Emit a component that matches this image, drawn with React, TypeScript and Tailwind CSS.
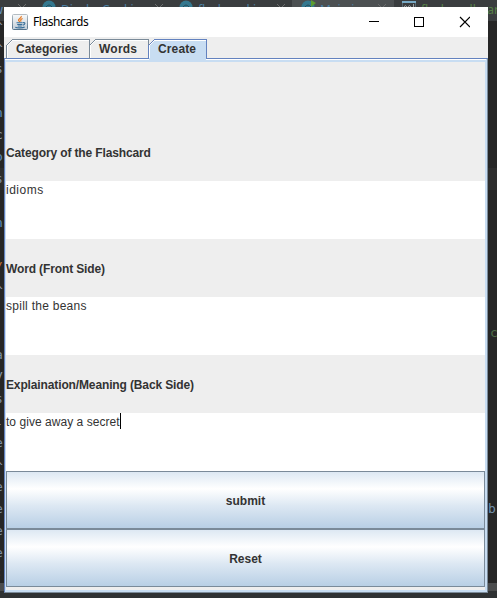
import React from "react";

const sans = "font-['Liberation_Sans',Arial,sans-serif]";

const gutter = [
  { y: 0, t: "w", c: "text-[#5f8fbd]" },
  { y: 17, t: "^", c: "text-[#8a9aab]" },
  { y: 39, t: "^", c: "text-[#8a9aab]" },
  { y: 59, t: "s", c: "text-[#7d8fa3]" },
  { y: 103, t: "n", c: "text-[#5f8fbd]" },
  { y: 125, t: "c", c: "text-[#8a9aab]" },
  { y: 147, t: "o", c: "text-[#5f8fbd]" },
  { y: 169, t: "s", c: "text-[#7d8fa3]" },
  { y: 213, t: "n", c: "text-[#5f8fbd]" },
  { y: 257, t: "/", c: "text-[#cc7832]" },
  { y: 281, t: "^", c: "text-[#8a9aab]" },
  { y: 345, t: "a", c: "text-[#7d8fa3]" },
  { y: 365, t: "y", c: "text-[#8a9aab]" },
  { y: 389, t: "s", c: "text-[#7d8fa3]" },
  { y: 414, t: "-", c: "text-[#8a9aab]" },
  { y: 433, t: "e", c: "text-[#7d8fa3]" },
  { y: 457, t: "^", c: "text-[#8a9aab]" },
  { y: 477, t: "e", c: "text-[#7d8fa3]" },
  { y: 499, t: "e", c: "text-[#7d8fa3]" },
  { y: 521, t: "e", c: "text-[#7d8fa3]" },
  { y: 543, t: "e", c: "text-[#7d8fa3]" },
  { y: 562, t: ":", c: "text-[#8a9aab]" },
];

function EditorBehind() {
  return (
    <div className="absolute inset-0 overflow-hidden bg-[#262626] font-['Noto_Sans',sans-serif] text-[12px]">
      <div className="absolute inset-x-0 top-0 h-[21px] bg-[#3a3d3f]" />
      <div className="absolute left-[292px] top-0 h-[7px] w-[102px] bg-[#4c5052]" />
      <div className="absolute left-0 top-[168px] h-[22px] w-full bg-[#2d2d2d]" />
      <div className="absolute bottom-0 left-0 h-[15px] w-full bg-[#4b4c4d]" />
      <div className="absolute bottom-0 left-0 h-[7px] w-full bg-[#2f3233]" />
      <span className="absolute left-[61px] top-0 whitespace-nowrap leading-[19px] text-[#4a7fa3]">DisplayCooking</span>
      <span className="absolute left-[198px] top-0 whitespace-nowrap leading-[19px] text-[#4a7fa3]">flashcard.java</span>
      <span className="absolute left-[320px] top-0 whitespace-nowrap leading-[19px] text-[#4a7fa3]">Main.java</span>
      <span className="absolute left-[421px] top-0 whitespace-nowrap leading-[19px] text-[#568047]">flashcardboard</span>
      <svg className="absolute left-0 top-0" width="497" height="8" fill="none">
        <circle cx="49" cy="7" r="6.5" fill="#34788f" />
        <circle cx="186" cy="7" r="6.5" fill="#34788f" />
        <circle cx="308" cy="7" r="6.5" fill="#34788f" />
        <path d="M46 7q3-4 6 0M183 7q3-4 6 0M305 7q3-4 6 0" stroke="#254b59" />
        <path d="M311 0l5 3-5 4z" fill="#5b9c30" />
        <path d="M402.500 1v6M415.500 1v6" stroke="#596a74" />
        <path d="M402 2h14" stroke="#77a9c5" strokeWidth="2" />
        <path d="M404 7q1-3 3 0M408 7q1-3 3 0M413.500 4v3" stroke="#9aa0a3" />
        <path d="M18 4l8 8M26 4l-8 8M155 4l8 8M163 4l-8 8M277 4l8 8M285 4l-8 8M378 4l8 8M386 4l-8 8" stroke="#6b6d6e" />
      </svg>
      {gutter.map((g) => (
        <span key={g.y} className={`absolute -left-[5px] font-['DejaVu_Sans_Mono',monospace] text-[13px] leading-5 ${g.c}`} style={{ top: g.y }}>
          {g.t}
        </span>
      ))}
      <span className="absolute left-[490px] top-[323px] font-['DejaVu_Sans_Mono',monospace] text-[13px] leading-5 text-[#4e6d46]">c</span>
      <span className="absolute left-[488px] top-[499px] font-['DejaVu_Sans_Mono',monospace] text-[13px] leading-5 text-[#7190ac]">b</span>
    </div>
  );
}

function JavaIcon() {
  return (
    <svg width="16" height="16" viewBox="0 0 16 16" fill="none">
      <defs>
        <linearGradient id="cupBg" x1="0" y1="0" x2="0" y2="1">
          <stop stopColor="#f8fafb" />
          <stop offset="1" stopColor="#c3ced7" />
        </linearGradient>
        <linearGradient id="cupEdge" x1="0" y1="0" x2="0" y2="1">
          <stop stopColor="#b4bcc2" />
          <stop offset="1" stopColor="#55748c" />
        </linearGradient>
      </defs>
      <rect x=".5" y=".5" width="15" height="15" rx="1" fill="url(#cupBg)" stroke="url(#cupEdge)" />
      <path d="M9.300 2C9.800 4.200 6 4.600 6.600 6.400L7.800 8M10.600 4.500C8.400 5.200 8.500 6.200 9 7.600" stroke="#e8761c" strokeWidth="1.200" />
      <path d="M4.500 8.800h6.200M5.200 10.500h5M5.800 12h4M11 8.800c2.800-.8 2.300 2-.3 2.300M3.300 13.200c2 1 7.400.9 9.400-.2" stroke="#386f99" strokeWidth="1.100" />
    </svg>
  );
}

function TitleBar() {
  return (
    <header className="flex h-[30px] shrink-0 items-center bg-white pl-2 pr-[18px] font-['Noto_Sans',sans-serif]">
      <JavaIcon />
      <span className="ml-[5px] text-[12px] tracking-[-0.42px] text-black">Flashcards</span>
      <svg className="ml-auto" width="103" height="12" viewBox="0 0 103 12" fill="none" stroke="#000">
        <path d="M2 5.500h10M47.500 1.500h9v9h-9z" shapeRendering="crispEdges" />
        <path d="M93 1l10 10M103 1l-10 10" strokeWidth="1.200" />
      </svg>
    </header>
  );
}

function Tab({ label, width, textWidth, active }: { label: string; width: number; textWidth: number; active?: boolean }) {
  return (
    <div className="relative h-[19px]" style={{ width }}>
      <svg className="absolute left-0 top-0" width={width + 1} height="21" shapeRendering="crispEdges">
        {active && <path d={`M1 21V6L6 1H${width}V21z`} fill="#c8ddf2" />}
        <path d={`M1.500 19V6.500L6.500 1.500H${width}`} fill="none" stroke="#ffffff" />
        <path d={`M.5 19.500V6.500L6.500 .5H${width + 0.5}V19.500`} fill="none" stroke={active ? "#6382bf" : "#7a8a99"} />
      </svg>
      <svg className="relative block" width={width} height="19">
        <text x="10" y="14" textLength={textWidth} fill="#333333" className="font-['Liberation_Sans',Arial,sans-serif] text-[12px] font-bold">
          {label}
        </text>
      </svg>
    </div>
  );
}

type FieldProps = { label: string; value: string; height?: string; tracking: string; caret?: boolean };

function Field({ label, value, height = "h-[58px]", tracking, caret }: FieldProps) {
  return (
    <>
      <div className={`flex shrink-0 items-end bg-[#eeeeee] pb-[21px] ${height}`}>
        <span className="text-[12px] font-bold leading-[14px] tracking-[-0.13px]">{label}</span>
      </div>
      <div className="flex h-[58px] shrink-0 items-start bg-white">
        <span className={`pt-[2px] text-[12px] leading-[15px] ${tracking}`}>{value}</span>
        {caret && <span className="h-4 w-px bg-black" />}
      </div>
    </>
  );
}

function SwingButton({ label }: { label: string }) {
  return (
    <button className="block h-[58px] w-full shrink-0 border border-[#7a8a99] bg-[linear-gradient(#dde8f3_0%,#ffffff_30%,#dde8f3_60%,#b8cfe5_100%)] pt-[2px] text-[12px] font-bold text-[#333333]">
      {label}
    </button>
  );
}

export default function App() {
  return (
    <div className="relative h-[598px] w-[497px] overflow-hidden">
      <EditorBehind />
      <main className={`relative ml-1 flex h-[593px] w-[484px] flex-col pt-[7px] text-[#333333] ${sans}`}>
        <TitleBar />
        <nav className="relative z-10 flex h-[21px] shrink-0 bg-[#eeeeee] pl-[2px] pt-[2px]">
          <Tab label="Categories" width={83} textWidth={62} />
          <Tab label="Words" width={59} textWidth={38} />
          <Tab label="Create" width={58} textWidth={38} active />
        </nav>
        <section className="flex h-[535px] flex-col border border-b-[#7a8a99] border-l-[#6382bf] border-r-[#7a8a99] border-t-[#6382bf] bg-[#c8ddf2] pb-[2px] pl-px pr-[2px]">
          <div className="-ml-px -mr-px h-px shrink-0 bg-white" />
          <div className="mt-[2px] flex grow flex-col bg-[#eeeeee]">
            <Field label="Category of the Flashcard" value="idioms" height="h-[119px]" tracking="tracking-[0.5px]" />
            <Field label="Word (Front Side)" value="spill the beans" tracking="tracking-[0.27px]" />
            <Field label="Explaination/Meaning (Back Side)" value="to give away a secret" tracking="tracking-[0.04px]" caret />
            <SwingButton label="submit" />
            <SwingButton label="Reset" />
          </div>
        </section>
      </main>
    </div>
  );
}
